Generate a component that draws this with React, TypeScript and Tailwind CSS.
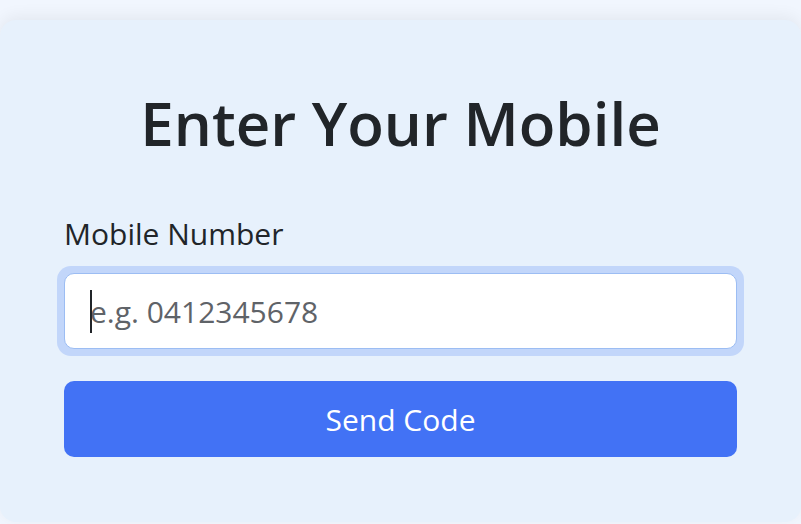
export default function App() {
  return (
    <div
      className="min-h-[524px] w-[801px] overflow-hidden bg-[#f1f6fe] pt-[20px]"
      style={{ fontFamily: '"Open Sans", "Noto Sans", sans-serif' }}
    >
      <div className="h-[502px] w-[801px] rounded-[16px] bg-[#e7f1fc] px-[64px] pt-[67px] shadow-[0_-4px_16px_rgba(0,0,0,0.06)]">
        <h1 className="text-center text-[60px] font-semibold leading-[72px] text-[#212529]">
          Enter Your Mobile
        </h1>
        <label className="mt-[56px] block text-[30px] leading-[38px] text-[#212529]">
          Mobile Number
        </label>
        <div className="relative -mx-[7px] mt-[13px] rounded-[14px] bg-[#c2d6fa] p-[7px]">
          <input
            className="h-[76px] w-full rounded-[10px] border border-[#9cbdf3] bg-white px-[25px] text-[30px] text-[#212529] caret-transparent outline-none placeholder:text-[#5f6368]"
            placeholder="e.g. 0412345678"
          />
          {/* text caret, as in the focused field */}
          <span className="pointer-events-none absolute left-[33px] top-[24px] h-[43px] w-[2px] bg-[#212529]" />
        </div>
        <button className="mt-[25px] h-[76px] w-full rounded-[10px] bg-[#4272f5] text-[30px] text-white">
          Send Code
        </button>
      </div>
    </div>
  );
}
